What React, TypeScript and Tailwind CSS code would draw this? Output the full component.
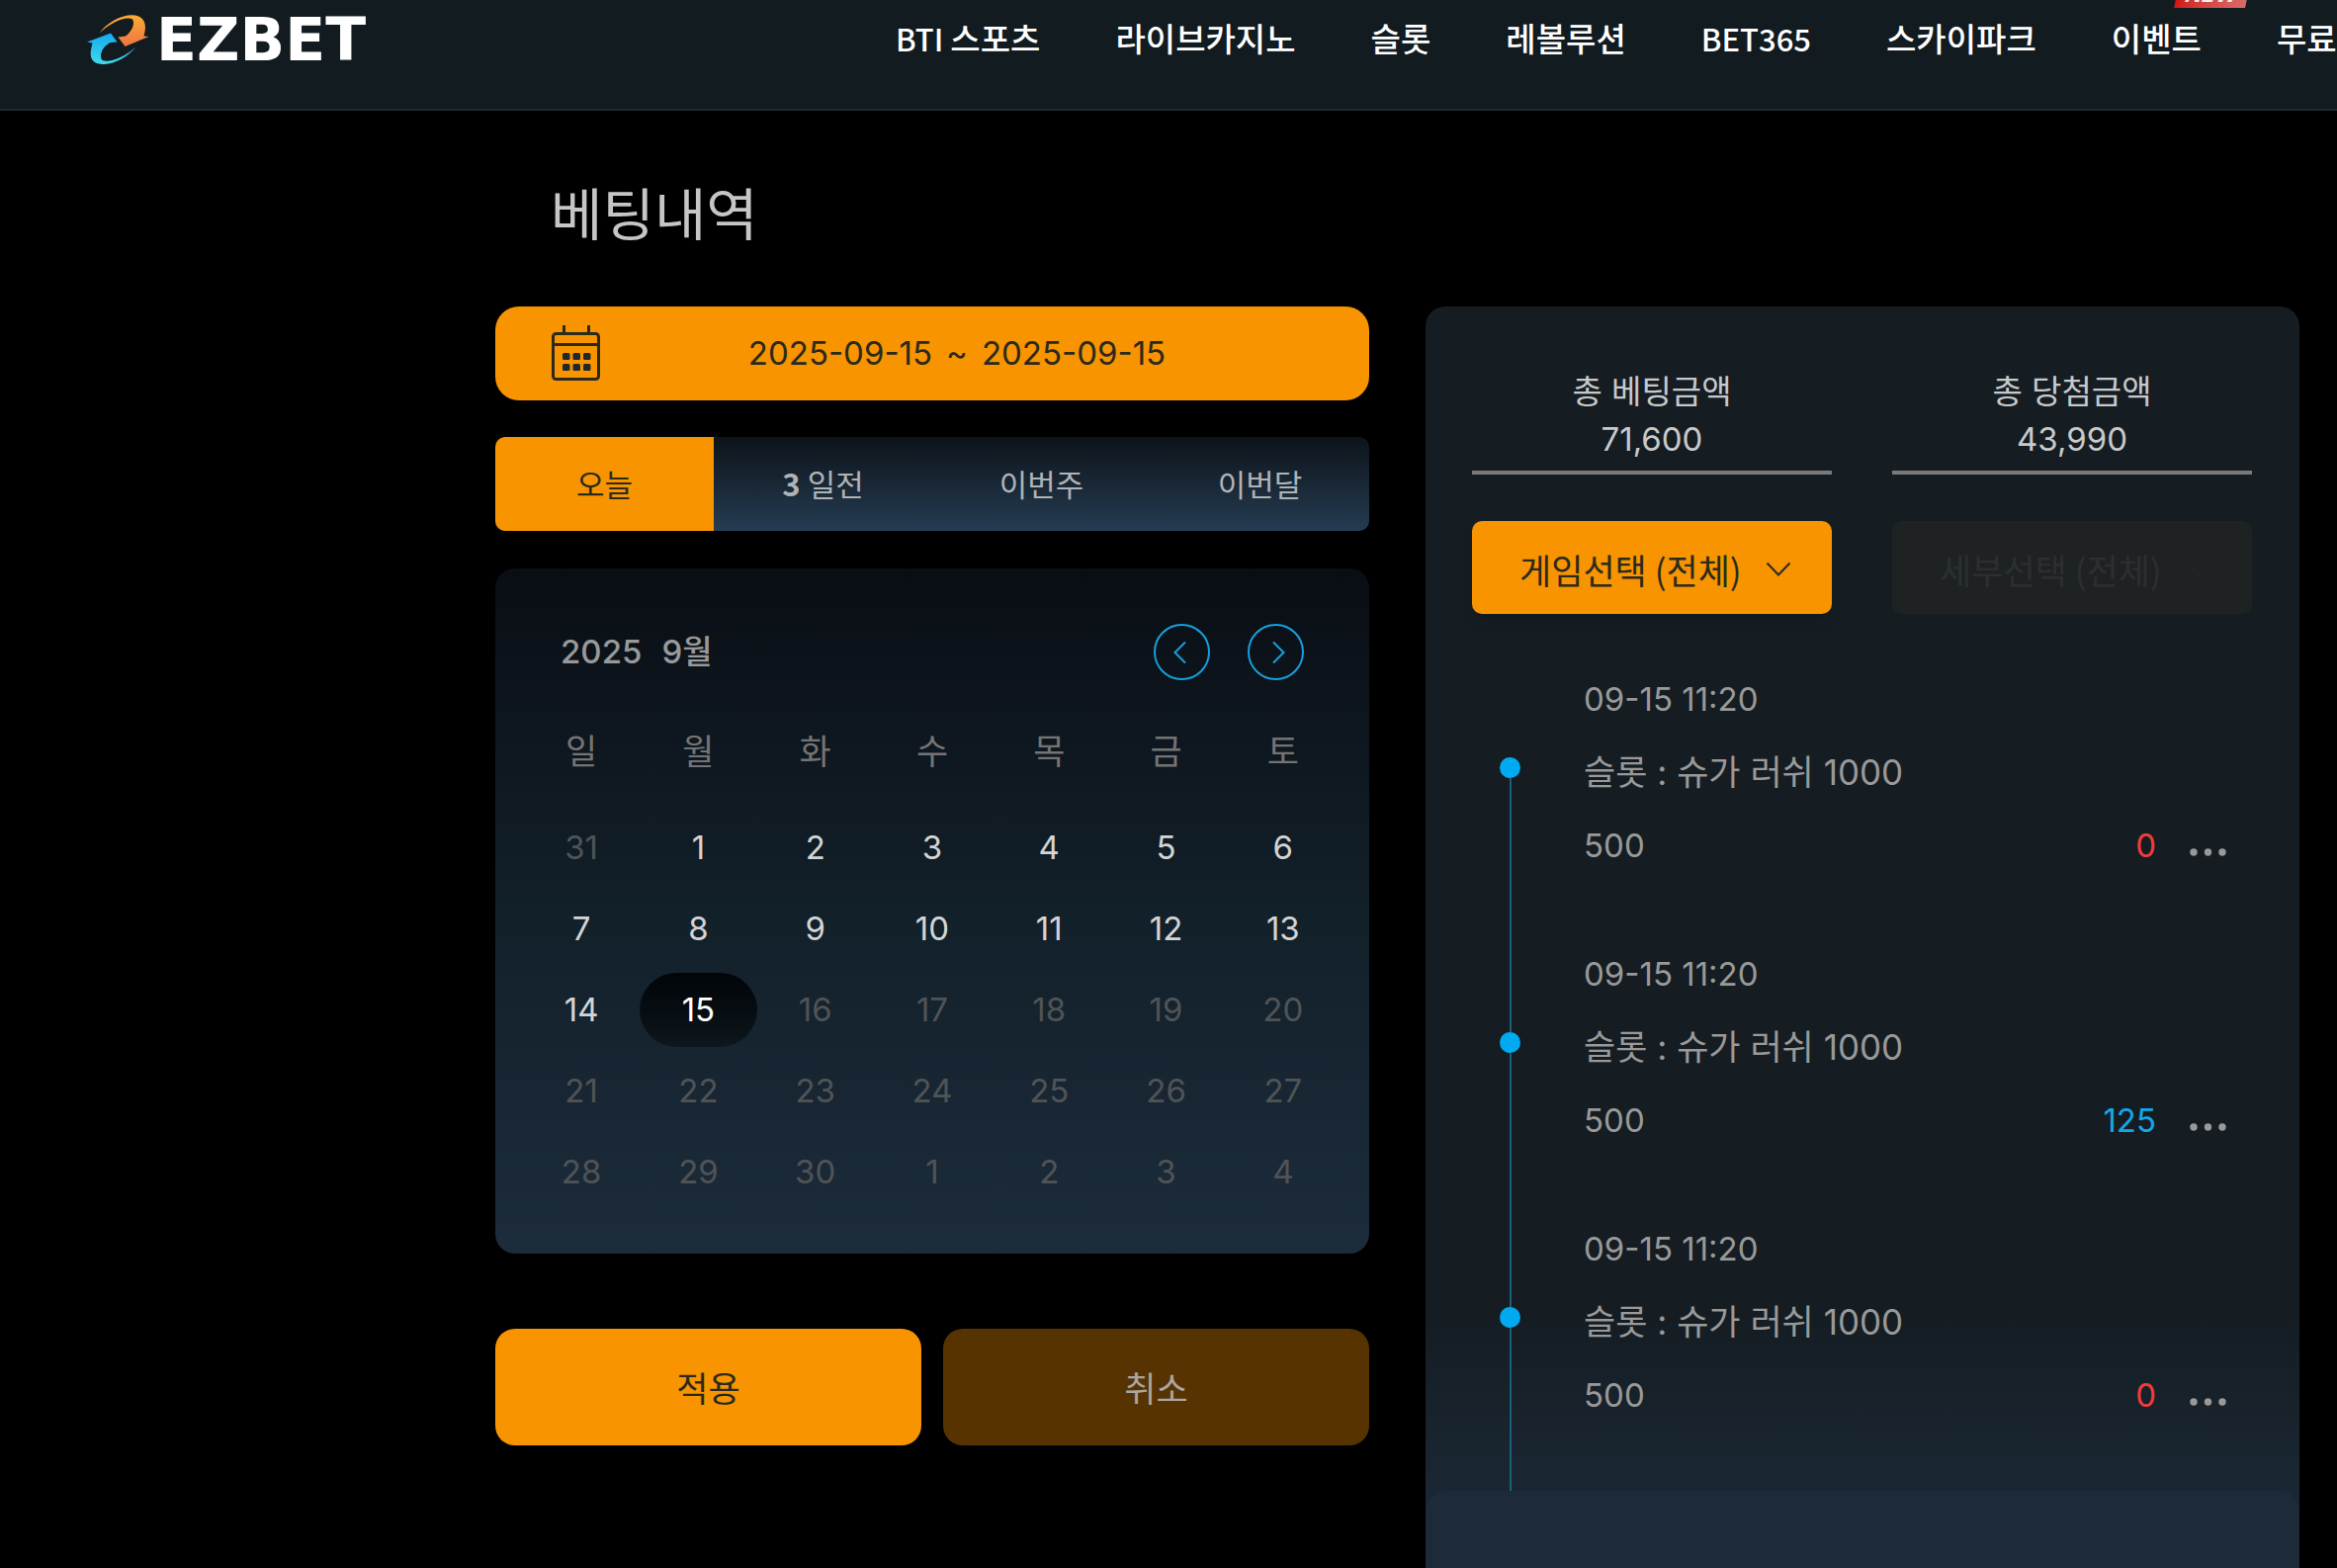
import React, { useState } from 'react';

const menus = [
  { latin: 'BTI ', name: '스포츠' },
  { latin: '', name: '라이브카지노' },
  { latin: '', name: '슬롯' },
  { latin: '', name: '레볼루션' },
  { latin: 'BET365', name: '' },
  { latin: '', name: '스카이파크' },
  { latin: '', name: '이벤트', isNew: true },
  { latin: '', name: '무료' },
];
const ranges = [
  { days: '', name: '오늘' },
  { days: '3 ', name: '일전' },
  { days: '', name: '이번주' },
  { days: '', name: '이번달' },
];
const weekdays = ['일', '월', '화', '수', '목', '금', '토'];
const weeks = [
  [31, 1, 2, 3, 4, 5, 6],
  [7, 8, 9, 10, 11, 12, 13],
  [14, 15, 16, 17, 18, 19, 20],
  [21, 22, 23, 24, 25, 26, 27],
  [28, 29, 30, 1, 2, 3, 4],
];
const today = 15;

const bets = [
  { id: 1, date: '09-15 11:20', game: '슬롯 : 슈가 러쉬 1000', amount: '500', win: 0 },
  { id: 2, date: '09-15 11:20', game: '슬롯 : 슈가 러쉬 1000', amount: '500', win: 125 },
  { id: 3, date: '09-15 11:20', game: '슬롯 : 슈가 러쉬 1000', amount: '500', win: 0 },
];

const Logo = () => (
  <a href="#home" aria-label="EZBET" className="flex items-center gap-2 text-white">
    <svg viewBox="0 0 62 50" className="w-[62px] h-[50px]" aria-hidden="true">
      <defs>
        <linearGradient id="orange" x1="0" y1="0" x2="0" y2="1">
          <stop offset="0" stopColor="#fbab34" />
          <stop offset="1" stopColor="#ee7442" />
        </linearGradient>
        <linearGradient id="blue" x1="0" y1="0" x2="0" y2="1">
          <stop offset="0" stopColor="#16a9ef" />
          <stop offset="1" stopColor="#3fdcea" />
        </linearGradient>
      </defs>
      <path
        d="M12.5 18.5C20 8 34 0 46 .2C56 .4 60.500 7 58.500 17L57.500 21.500L62.500 22L38.500 32L31.500 22.500L39 21.500C45 17 49 9 46 4.500C40 .8 25 7 12.500 18.500Z"
        fill="url(#orange)"
      />
      <path
        d="M49.500 32.500C41 43 27 50.500 15 50C5 49.500 2 43 4.500 33L5.500 28.500L0 27.500L24 18.500L30.500 27.500L23.500 28C16 32 12 40 15 45.500C21 49.500 38 43 49.500 32.500Z"
        fill="url(#blue)"
      />
    </svg>
    <span className="font-['DejaVu_Sans'] font-bold text-[60px] leading-[52px]">EZBET</span>
  </a>
);

const Header = () => (
  <header className="h-28 bg-[#111b20] border-b-2 border-[#20292d] flex items-start overflow-hidden">
    <div className="w-[906px] shrink-0 pl-[88px] pt-3.5">
      <Logo />
    </div>
    <nav className="flex gap-[76px] whitespace-nowrap text-white font-['Noto_Sans_CJK_KR',sans-serif] font-medium text-[33px] leading-[76px]">
      {menus.map((menu) => (
        <a key={menu.latin + menu.name} href="#menu" className="relative">
          {menu.latin && <span className="text-[31px]">{menu.latin}</span>}
          {menu.name}
          {menu.isNew && (
            <span className="absolute -top-5 left-[66px] w-[72px] h-7 -skew-x-12 bg-linear-to-r from-[#d01414] to-[#d86a6a] flex items-center justify-center font-['Inter'] italic font-bold text-[22px] leading-7 text-white/90">
              NEW
            </span>
          )}
        </a>
      ))}
    </nav>
  </header>
);

const CalendarIcon = () => (
  <svg viewBox="0 0 50 58" className="w-[50px] h-[58px]" fill="none" stroke="#2b2a1c" strokeWidth="3" aria-hidden="true">
    <rect x="2.500" y="8.500" width="46" height="46" rx="3" />
    <path d="M2.500 19.500H48.500M13.500 0V8M38.500 0V8" />
    <g fill="#22292b" stroke="none">
      <rect x="12" y="28" width="7.500" height="7" rx="1.500" />
      <rect x="22.500" y="28" width="7.500" height="7" rx="1.500" />
      <rect x="33" y="28" width="7.500" height="7" rx="1.500" />
      <rect x="12" y="39" width="7.500" height="7" rx="1.500" />
      <rect x="22.500" y="39" width="7.500" height="7" rx="1.500" />
      <rect x="33" y="39" width="7.500" height="7" rx="1.500" />
    </g>
  </svg>
);

const Calendar = () => {
  const [selected, setSelected] = useState(today);

  return (
    <section className="mt-[38px] px-7 pt-14 pb-[42px] rounded-[20px] bg-linear-to-b from-[#0a0e14] via-[#12202a] to-[#1d2c3b]">
      <div className="flex items-center justify-between px-[38px]">
        <h2 className="flex gap-5 text-[33px] leading-[57px] font-medium text-[#999999]">
          <span>2025</span>
          <span>9월</span>
        </h2>
        <div className="flex gap-[38px]">
          <button aria-label="이전 달" className="size-[57px] rounded-full border-2 border-[#16a0dc] flex items-center justify-center">
            <svg viewBox="0 0 18 24" className="w-[18px] h-6" fill="none" stroke="#16a0dc" strokeWidth="2" aria-hidden="true">
              <path d="M12 1.500L1.500 12L12 22.500" />
            </svg>
          </button>
          <button aria-label="다음 달" className="size-[57px] rounded-full border-2 border-[#16a0dc] flex items-center justify-center">
            <svg viewBox="0 0 18 24" className="w-[18px] h-6" fill="none" stroke="#16a0dc" strokeWidth="2" aria-hidden="true">
              <path d="M6 1.500L16.500 12L6 22.500" />
            </svg>
          </button>
        </div>
      </div>

      <table className="mt-4 w-full table-fixed text-center text-[33px]">
        <thead>
          <tr className="h-28">
            {weekdays.map((day) => (
              <th key={day} scope="col" className="p-0 text-[35px] font-normal text-[#747474]">{day}</th>
            ))}
          </tr>
        </thead>
        <tbody>
          {weeks.map((week, row) => (
            <tr key={row} className="h-[82px]">
              {week.map((day, col) => {
                const inMonth = !(row === 0 && day > 7) && !(row === 4 && day < 7);
                const enabled = inMonth && day <= today;
                return (
                  <td key={col} className="p-0">
                    <button
                      disabled={!enabled}
                      onClick={() => setSelected(day)}
                      className={
                        enabled && day === selected
                          ? 'w-full h-[75px] pt-0.5 rounded-full bg-linear-to-b from-[#020508] to-[#0e171d] text-white'
                          : enabled
                            ? 'w-full h-[75px] pt-0.5 text-[#d4d4d4]'
                            : 'w-full h-[75px] pt-0.5 text-[#505355]'
                      }
                    >
                      {day}
                    </button>
                  </td>
                );
              })}
            </tr>
          ))}
        </tbody>
      </table>
    </section>
  );
};

const Period = () => {
  const [range, setRange] = useState('오늘');

  return (
    <div className="self-start">
      <button className="w-full h-[95px] rounded-3xl bg-[#f79400] flex items-center px-14 text-[#2b2a1c] text-[33px]">
        <CalendarIcon />
        <span className="flex-1 flex justify-center gap-3.5">
          <span>2025-09-15</span>
          <span>~</span>
          <span>2025-09-15</span>
        </span>
      </button>

      <div className="mt-[37px] h-[95px] grid grid-cols-4 rounded-[10px] overflow-hidden bg-linear-to-b from-[#0d141a] to-[#253c53] font-['Noto_Sans_CJK_KR',sans-serif] text-[31px]">
        {ranges.map((item) => (
          <button
            key={item.name}
            onClick={() => setRange(item.name)}
            className={item.name === range ? 'bg-[#f79400] text-[#2b2a1c]' : 'text-[#b0b3b6]'}
          >
            {item.days && <span className="font-bold">{item.days}</span>}
            {item.name}
          </button>
        ))}
      </div>

      <Calendar />

      <div className="mt-[76px] grid grid-cols-2 gap-[22px] font-['Noto_Sans_CJK_KR',sans-serif] text-[35px]">
        <button className="h-[118px] rounded-[20px] bg-[#f79400] text-[#2b2a1c]">적용</button>
        <button className="h-[118px] rounded-[20px] bg-[#573302] text-[#aaa6a0]">취소</button>
      </div>
    </div>
  );
};

const Total = ({ label, value }: { label: string; value: string }) => (
  <div className="border-b-4 border-[#7a7a7a] pb-2 text-center text-[33px] leading-[48px] text-[#c8c9ca]">
    <p>{label}</p>
    <p>{value}</p>
  </div>
);

const History = () => (
  <section className="flex flex-col rounded-t-[20px] bg-[#151d23]">
    <div className="pl-[47px] pr-12 pt-[62px] grid grid-cols-2 gap-x-[61px] gap-y-[47px]">
      <Total label="총 베팅금액" value="71,600" />
      <Total label="총 당첨금액" value="43,990" />

      <div className="relative">
        <select
          aria-label="게임선택"
          className="w-full h-[94px] pt-1 pl-12 pr-20 appearance-none rounded-[10px] bg-[#f79400] text-[#2b2a1c] font-['Noto_Sans_CJK_KR',sans-serif] text-[35px] shadow-lg"
        >
          <option>게임선택 (전체)</option>
        </select>
        <svg viewBox="0 0 26 16" className="absolute top-[41px] right-[41px] w-[26px] h-4 pointer-events-none" fill="none" stroke="#2b2a1c" strokeWidth="2" aria-hidden="true">
          <path d="M1.500 1.500L13 13.500L24.500 1.500" />
        </svg>
      </div>
      <div className="relative">
        <select
          aria-label="세부선택"
          disabled
          className="w-full h-[94px] pt-1 pl-12 pr-20 appearance-none rounded-[10px] bg-[#1f2223] text-[#2b2f33] font-['Noto_Sans_CJK_KR',sans-serif] text-[35px] opacity-100"
        >
          <option>세부선택 (전체)</option>
        </select>
        <svg viewBox="0 0 26 16" className="absolute top-[41px] right-[41px] w-[26px] h-4 pointer-events-none" fill="none" stroke="#222628" strokeWidth="2" aria-hidden="true">
          <path d="M1.500 1.500L13 13.500L24.500 1.500" />
        </svg>
      </div>
    </div>

    <ul className="pt-[49px] pl-[75px] pr-[73px] text-[33px] leading-[74px] text-[#999999] bg-linear-to-b from-[#151d23] from-80% to-[#1a2733]">
      {bets.map((bet, index) => (
        <li key={bet.id} className="group flex gap-16">
          {/* timeline rail */}
          <div className="w-[21px] flex flex-col items-center">
            <span className={index === 0 ? 'w-0.5 h-24' : 'w-0.5 h-24 bg-[#1b5f7b]'} />
            <span className="size-[21px] rounded-full bg-[#00aaf0]" />
            <span className="w-0.5 flex-1 bg-[#1b5f7b]" />
          </div>
          <div className="flex-1 pb-14 group-last:pb-15">
            <p>{bet.date}</p>
            <p className="text-[35px]">{bet.game}</p>
            <div className="flex items-center">
              <span>{bet.amount}</span>
              <span className={bet.win > 0 ? 'ml-auto text-[#12a7e6]' : 'ml-auto text-[#f03c3c]'}>{bet.win}</span>
              <button aria-label="상세보기" className="ml-[34px]">
                <svg viewBox="0 0 38 24" className="w-[38px] h-6" fill="#999999" aria-hidden="true">
                  <circle cx="4" cy="19" r="3.700" />
                  <circle cx="18.500" cy="19" r="3.700" />
                  <circle cx="33" cy="19" r="3.700" />
                </svg>
              </button>
            </div>
          </div>
        </li>
      ))}
    </ul>
    <div className="flex-1 bg-[#1a2733]">
      <div className="h-full rounded-t-[20px] bg-[#1c2a39]"></div>
    </div>
  </section>
);

const App = () => {
  return (
    <div className="min-h-screen flex flex-col bg-black font-['Inter','Noto_Sans_CJK_KR',sans-serif]">
      <Header />
      <main className="flex-1 flex flex-col pl-[501px] pr-[38px]">
        <h1 className="pt-16 pb-[50px] pl-14 text-[57px] leading-[84px] text-[#c6c6c6]">베팅내역</h1>
        <div className="flex-1 grid grid-cols-2 gap-[57px]">
          <Period />
          <History />
        </div>
      </main>
    </div>
  );
};

export default App;
